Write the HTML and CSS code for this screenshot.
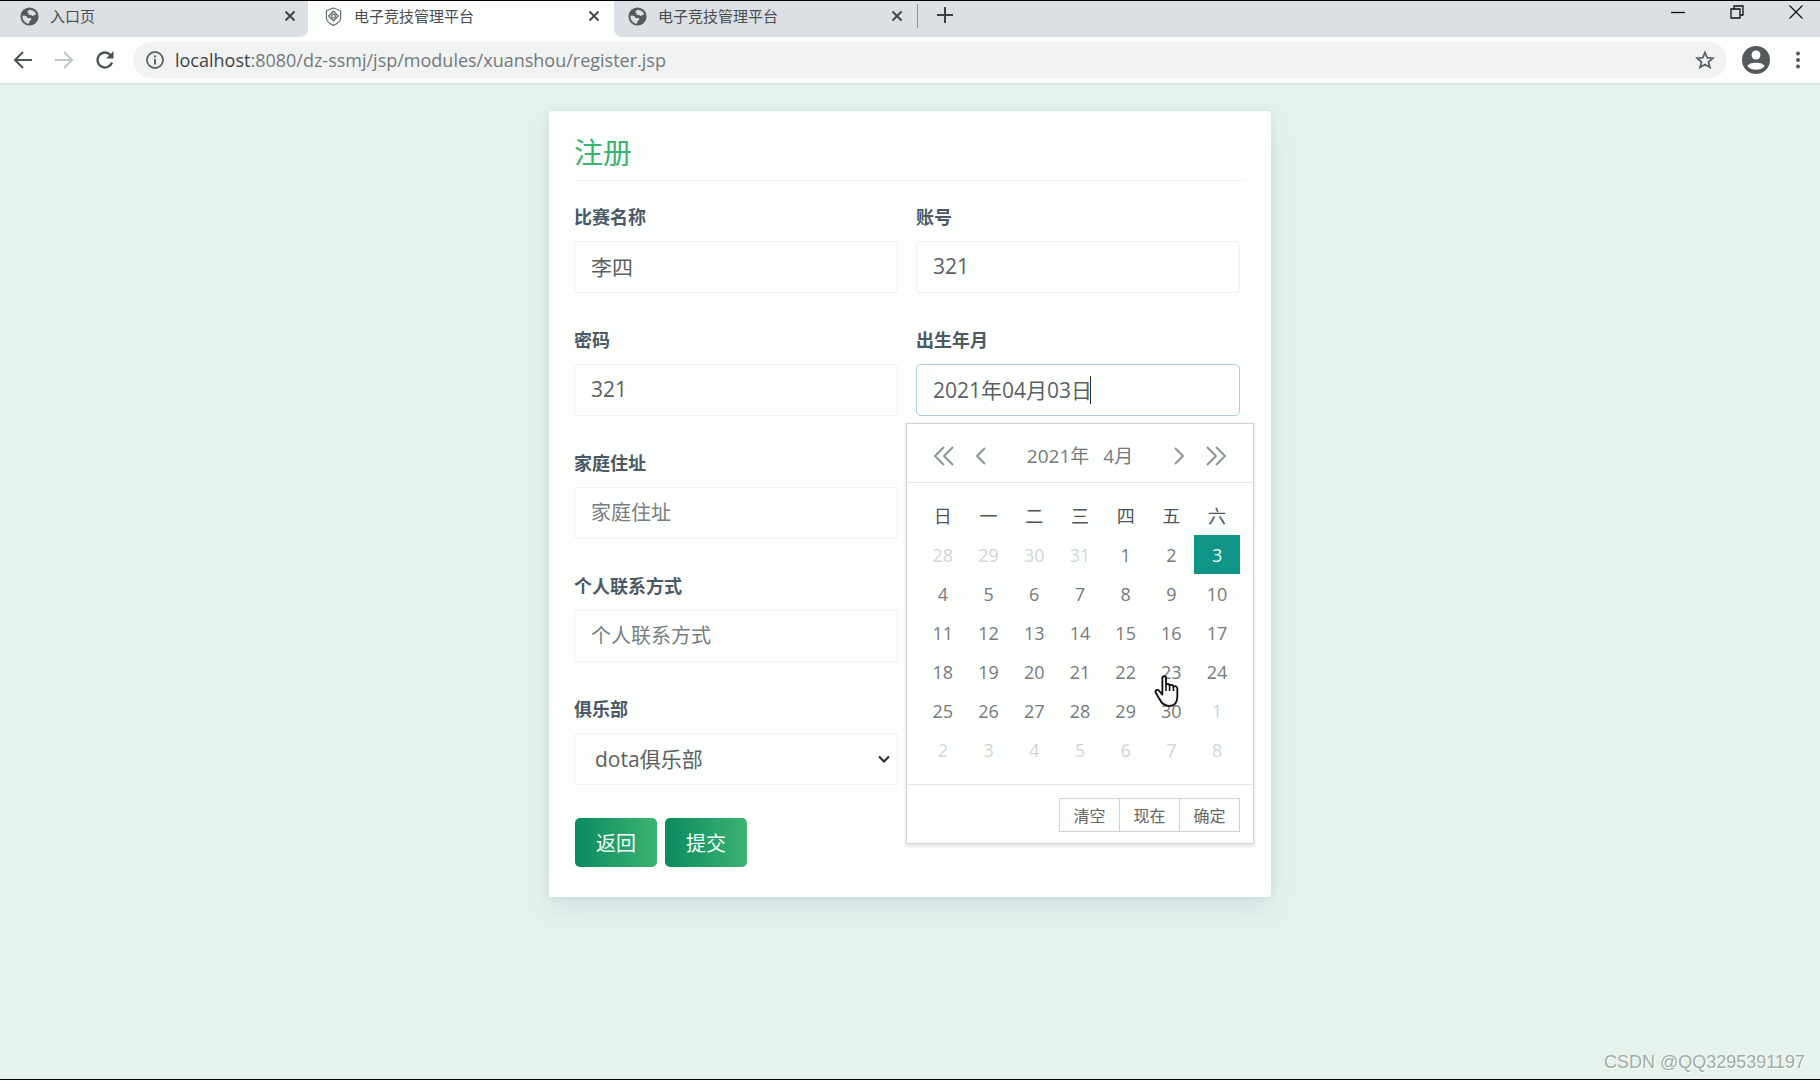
FILE: index.html
```html
<!DOCTYPE html>
<html lang="zh-CN">
<head>
<meta charset="utf-8">
<title>电子竞技管理平台</title>
<link rel="stylesheet" href="styles.css">
</head>
<body>
<svg class="defs" aria-hidden="true">
  <symbol id="globe" viewBox="0 0 20 20"><circle cx="10" cy="10" r="9.500" fill="#55595d"/><path d="M9 3.500C12 2.500 15.500 4 17 7.500L13.500 9.500L11.500 8.500L8.500 8L9.500 6.500L7.500 5.500Z M2.500 9L6.500 9.500L8 11.500L11.500 11.500L12 13.500L10 15L9.500 17.500C5.500 17.500 2.500 14 2.500 9Z" fill="#dcdfe4"/></symbol>
  <symbol id="close" viewBox="0 0 12 12"><path d="M1.500 1.500L10.500 10.500M10.500 1.500L1.500 10.500" stroke="#43474b" stroke-width="2"/></symbol>
</svg>
<div class="window">
  <header class="tabs">
    <div class="tab before"><svg class="fav"><use href="#globe"/></svg><span>入口页</span><button type="button" aria-label="关闭"><svg><use href="#close"/></svg></button></div>
    <div class="tab active"><svg class="fav" viewBox="0 0 20 20" fill="none" stroke="#6b6f73"><path d="M10 1L17.500 4V11C17.500 15 14.500 17.500 10 19.300C5.500 17.500 2.500 15 2.500 11V4Z" stroke-width="1.300"/><path d="M10 4.500L15 9.500L10 14.500L5 9.500Z" stroke-width="1.500"/><circle cx="10" cy="9.500" r="2" stroke-width="1.300"/></svg><span>电子竞技管理平台</span><button type="button" aria-label="关闭"><svg><use href="#close"/></svg></button></div>
    <div class="tab after"><svg class="fav"><use href="#globe"/></svg><span>电子竞技管理平台</span><button type="button" aria-label="关闭"><svg><use href="#close"/></svg></button></div>
    <button type="button" class="plus" aria-label="新标签页"><svg viewBox="0 0 16 16" width="16" height="16"><path d="M8 0V16M0 8H16" stroke="#3c4043" stroke-width="2"/></svg></button>
    <div class="controls">
      <button type="button" aria-label="最小化"><svg viewBox="0 0 14 14"><path d="M0 7.500H14" stroke="#111" stroke-width="1.300"/></svg></button>
      <button type="button" aria-label="还原"><svg viewBox="0 0 14 14" fill="none" stroke="#111" stroke-width="1.300"><path d="M1 4H10V13H1ZM4 4V1H13V10H10"/></svg></button>
      <button type="button" aria-label="关闭窗口"><svg viewBox="0 0 14 14"><path d="M.5 .5L13.500 13.500M13.500 .5L.5 13.500" stroke="#111" stroke-width="1.200"/></svg></button>
    </div>
  </header>
  <nav class="toolbar">
    <button type="button" aria-label="后退"><svg viewBox="0 0 20 20" fill="none" stroke="#4d5154" stroke-width="2"><path d="M19 10H2M10 2L2 10L10 18"/></svg></button>
    <button type="button" aria-label="前进"><svg viewBox="0 0 20 20" fill="none" stroke="#c2c5c7" stroke-width="2"><path d="M1 10H18M10 2L18 10L10 18"/></svg></button>
    <button type="button" aria-label="刷新"><svg viewBox="0 0 20 20"><path d="M17 12.500A7.500 7.500 0 1 1 15.500 5" fill="none" stroke="#4d5154" stroke-width="2.300"/><path d="M18.500 1V8.500H11Z" fill="#4d5154"/></svg></button>
    <div class="address">
      <svg viewBox="0 0 20 20" width="20" height="20"><circle cx="10" cy="10" r="8" fill="none" stroke="#5f6368" stroke-width="1.800"/><path d="M10 9V14.500M10 5.500V7.500" stroke="#5f6368" stroke-width="2"/></svg>
      <span class="url"><b>localhost</b>:8080/dz-ssmj/jsp/modules/xuanshou/register.jsp</span>
      <svg viewBox="0 0 20 20" width="20" height="20"><path d="M10 2.500L12.200 7.700L17.800 8.200L13.500 12L14.900 17.400L10 14.500L5.100 17.400L6.500 12L2.200 8.200L7.800 7.700Z" fill="none" stroke="#5f6368" stroke-width="1.800"/></svg>
    </div>
    <button type="button" class="avatar" aria-label="用户"><svg viewBox="0 0 28 28"><circle cx="14" cy="14" r="14" fill="#55595c"/><circle cx="14" cy="9" r="4.500" fill="#fff"/><path d="M5.500 20C7 15.500 21 15.500 22.500 20C20 25 8 25 5.500 20Z" fill="#fff"/></svg></button>
    <button type="button" class="more" aria-label="菜单"><svg viewBox="0 0 6 18" fill="#55595c"><circle cx="3" cy="2.500" r="2"/><circle cx="3" cy="9" r="2"/><circle cx="3" cy="15.500" r="2"/></svg></button>
  </nav>
  <main>
    <form class="card">
      <h1>注册</h1>
      <div class="fields">
        <div class="field"><label for="name">比赛名称</label><input id="name" type="text" value="李四"></div>
        <div class="field"><label for="account">账号</label><input id="account" type="text" value="321"></div>
        <div class="field"><label for="pwd">密码</label><input id="pwd" type="text" value="321"></div>
        <div class="field">
          <label for="birth">出生年月</label><input id="birth" class="focused" type="text" value="2021年04月03日"><i class="caret"></i>
          <div class="picker">
            <div class="picker-head">
              <button type="button" aria-label="上一年"><svg width="22" height="20" viewBox="0 0 22 20"><path d="M11 1L2 10L11 19M20 1L11 10L20 19"/></svg></button>
              <button type="button" aria-label="上一月"><svg width="12" height="18" viewBox="0 0 12 18"><path d="M10 1L2 9L10 17"/></svg></button>
              <span class="month"><span>2021年</span><span>4月</span></span>
              <button type="button" aria-label="下一月"><svg width="12" height="18" viewBox="0 0 12 18"><path d="M2 1L10 9L2 17"/></svg></button>
              <button type="button" aria-label="下一年"><svg width="22" height="20" viewBox="0 0 22 20"><path d="M2 1L11 10L2 19M11 1L20 10L11 19"/></svg></button>
            </div>
            <div class="picker-body">
              <table>
                <thead><tr><th>日</th><th>一</th><th>二</th><th>三</th><th>四</th><th>五</th><th>六</th></tr></thead>
                <tbody>
                  <tr><td class="out">28</td><td class="out">29</td><td class="out">30</td><td class="out">31</td><td>1</td><td>2</td><td class="on">3</td></tr>
                  <tr><td>4</td><td>5</td><td>6</td><td>7</td><td>8</td><td>9</td><td>10</td></tr>
                  <tr><td>11</td><td>12</td><td>13</td><td>14</td><td>15</td><td>16</td><td>17</td></tr>
                  <tr><td>18</td><td>19</td><td>20</td><td>21</td><td>22</td><td>23</td><td>24</td></tr>
                  <tr><td>25</td><td>26</td><td>27</td><td>28</td><td>29</td><td>30</td><td class="out">1</td></tr>
                  <tr><td class="out">2</td><td class="out">3</td><td class="out">4</td><td class="out">5</td><td class="out">6</td><td class="out">7</td><td class="out">8</td></tr>
                </tbody>
              </table>
            </div>
            <div class="picker-foot"><button type="button">清空</button><button type="button">现在</button><button type="button">确定</button></div>
            <svg class="pointer" viewBox="0 0 24 32"><path d="M8 2.500C8 .8 11.500 .8 11.500 2.500V9.500C12 8.200 15 8.500 15 10.200C15.700 9.200 18.500 9.500 18.700 11.200C19.800 10.200 22.500 11 22.500 13V21C22.500 26.500 20 30 14.500 30C9.500 30 7 27 5 23L1.500 17C.5 14.800 3.500 13.500 5 15.500L8 19Z" fill="#fff" stroke="#111" stroke-width="1.800" stroke-linejoin="round"/><path d="M11.500 9V15.500M15 10V15.500M18.700 11V15.500" stroke="#111" stroke-width="1.500"/></svg>
          </div>
        </div>
        <div class="field left"><label for="address">家庭住址</label><input id="address" type="text" placeholder="家庭住址"></div>
        <div class="field left"><label for="contact">个人联系方式</label><input id="contact" type="text" placeholder="个人联系方式"></div>
        <div class="field left"><label for="club">俱乐部</label><select id="club"><option>dota俱乐部</option></select><svg class="chevron" viewBox="0 0 12 8"><path d="M1 1.500L6 6.500L11 1.500" fill="none" stroke="#333" stroke-width="2.200"/></svg></div>
      </div>
      <div class="actions"><button type="button">返回</button><button type="submit">提交</button></div>
    </form>
  </main>
  <div class="watermark">CSDN @QQ3295391197</div>
</div>
</body>
</html>
```

FILE: styles.css
```css
* { box-sizing: border-box; }
body { margin: 0; font-family: "Open Sans", "Noto Sans CJK SC", sans-serif; color: #555; }
button { border: 0; padding: 0; background: none; font-family: inherit; }
svg { display: block; flex: none; }
.defs { position: absolute; width: 0; height: 0; }
.window { position: relative; min-height: 100vh; border-top: 1px solid #000; border-bottom: 1px solid #000; background: #e6f3ec; display: flex; flex-direction: column; }

/* browser chrome */
.tabs { display: flex; height: 36px; background: #fdfffd; }
.tab { flex: 0 1 306px; display: flex; align-items: center; gap: 11px; padding: 0 14px 6px 16px; font-size: 15px; line-height: 20px; color: #4a4d50; background: #dcdfe4; }
.tab span { flex: 1; white-space: nowrap; overflow: hidden; }
.tab button svg { width: 12px; height: 12px; }
.tab .fav { width: 19px; height: 19px; }
.tab.before { flex-basis: 308px; padding-left: 20px; padding-right: 12px; border-bottom-right-radius: 8px; }
.tab.active { background: #fdfffd; }
.tab.after { flex-basis: 303px; border-bottom-left-radius: 8px; padding-left: 14px; }
.plus { display: flex; align-items: center; padding: 0 0 8px 20px; background: linear-gradient(#8f9397, #8f9397) 0 3px / 1px 24px no-repeat #dcdfe4; }
.controls { flex: 1; display: flex; justify-content: flex-end; align-items: center; gap: 45px; padding: 0 17px 14px 0; background: #dcdfe4; }
.controls svg { width: 14px; height: 14px; }
.toolbar { display: flex; align-items: center; height: 48px; padding: 0 19px 0 13px; background: #fdfffd; border-bottom: 2px solid #dbe6e0; }
.toolbar > button { width: 20px; margin-right: 21px; }
.toolbar > button svg { width: 20px; height: 20px; }
.address { flex: 1; display: flex; align-items: center; gap: 10px; height: 36px; padding: 0 12px; border-radius: 18px; background: #f0f3f2; margin-left: -3px; }
.url { flex: 1; font-size: 18px; line-height: 24px; color: #74787b; }
.url b { font-weight: 400; color: #3f4346; }
.toolbar .avatar { width: 28px; margin: 0 25px 0 15px; }
.toolbar .avatar svg { width: 28px; height: 28px; }
.toolbar .more { width: 6px; margin: 0; }
.toolbar .more svg { width: 6px; height: 18px; }

/* registration form */
main { flex: 1; padding: 26px 16px; }
.card { max-width: 722px; margin: 0 auto; padding: 24px 25px 30px; background: #fdfffd; border-radius: 2px; box-shadow: 0 12px 28px rgba(90, 110, 190, .13), 0 0 8px rgba(70, 140, 110, .1); }
h1 { margin: 0 0 24px; padding-bottom: 9px; border-bottom: 1px solid #eff2f1; font-size: 29px; line-height: 36px; font-weight: 400; color: #3cb371; }
.fields { display: grid; grid-template-columns: 1fr 1fr; gap: 35px 18px; margin-right: 6px; }
.field { position: relative; display: flex; flex-direction: column; gap: 12px; }
.left { grid-column: 1; }
label { font-size: 18px; line-height: 24px; font-weight: 700; color: #4b5965; }
input, select { width: 100%; height: 52px; margin: 0; padding: 0 16px 2px; border: 1px solid #eff2f1; border-radius: 3px; background: #fdfffd; font: 21px/28px "Open Sans", "Noto Sans CJK SC", sans-serif; color: #5c5f61; }
select { appearance: none; padding: 0 20px; }
input::placeholder { color: #787d81; opacity: 1; font-size: 20px; }
input.focused, input:focus { border-color: #a9cfe0; border-radius: 5px; outline: 0; }
.caret { position: absolute; left: 174px; top: 48px; width: 1px; height: 28px; background: #333; }
.chevron { position: absolute; right: 8px; bottom: 22px; width: 12px; height: 8px; }
.actions { display: flex; gap: 8px; margin-top: 33px; padding-left: 1px; }
.actions button { width: 82px; height: 49px; border-radius: 5px; background: linear-gradient(90deg, #0b8a60, #3cb371); color: #f4fff9; font-size: 20px; }

/* date picker */
.picker { position: absolute; z-index: 2; top: 95px; left: -10px; width: 348px; background: #fdfffd; border: 1px solid #d0d4d2; box-shadow: 0 2px 4px rgba(0, 0, 0, .13); }
.picker-head { display: flex; align-items: center; height: 59px; padding: 5px 26px 0; gap: 20px; border-bottom: 1px solid #e2e5e4; }
.picker-head path { fill: none; stroke: #8e9294; stroke-width: 1.900; }
.month { flex: 1; display: flex; justify-content: center; gap: 14px; font-size: 19px; line-height: 26px; color: #77797b; }
.picker-body { padding: 13px 13px 15px; }
table { width: 100%; table-layout: fixed; border-collapse: collapse; }
th, td { height: 39px; padding: 0; text-align: center; font-size: 18px; line-height: 24px; font-weight: 400; color: #77797b; }
th { color: #505355; }
.out { color: #d2d5d4; }
.on { background: #0f9485; color: #e9fffb; }
.picker-foot { display: flex; justify-content: flex-end; padding: 13px 13px 11px; border-top: 1px solid #e2e5e4; }
.picker-foot button { width: 61px; height: 34px; border: 1px solid #cfd2d1; font-size: 16px; color: #666; }
.picker-foot button + button { margin-left: -1px; }
.pointer { position: absolute; left: 247px; top: 251px; width: 25px; height: 33px; }

.watermark { position: absolute; right: 15px; bottom: 5px; font: 18px/24px "Liberation Sans", sans-serif; color: #a3aba7; text-shadow: 1px 1px 0 #fff; }
```
